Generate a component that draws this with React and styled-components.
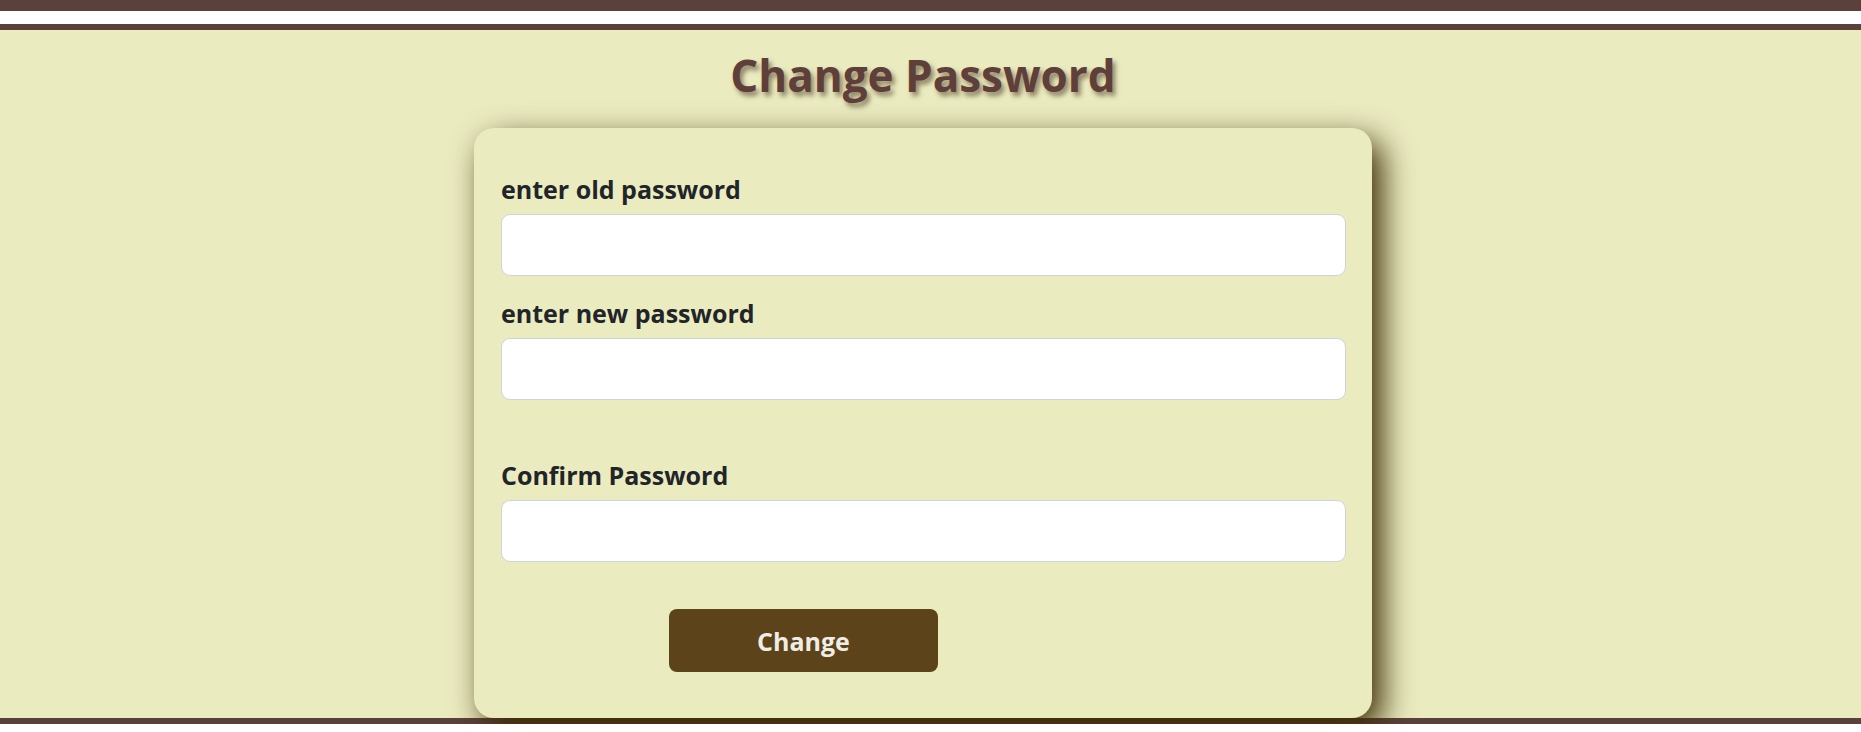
import React, { useState } from 'react';
import styled, { createGlobalStyle } from 'styled-components';

const GlobalStyle = createGlobalStyle`
    body {
        margin: 0;
        background: #ffffff;
        font-family: "Open Sans", "Noto Sans", sans-serif;
    }
    * {
        box-sizing: border-box;
    }
`;

// 상단 바
const TopBar = styled.div`
    height: 11px;
    background: #5c403c;
`;

// 본문 영역
const Main = styled.main`
    margin-top: 13px;
    background: #ebebc0;
    border-top: 6px solid #5c403c;
    border-bottom: 6px solid #5c403c;
    padding-right: 15px;
    display: flex;
    flex-direction: column;
    align-items: center;
`;

const Title = styled.h1`
    margin: 13px 0 21px;
    font-size: 44px;
    line-height: 64px;
    font-weight: 700;
    color: #5e3f3a;
    text-shadow: 3px 4px 5px rgba(60, 40, 20, 0.55);
`;

// 카드
const Card = styled.form`
    width: 898px;
    padding: 43px 26px 46px 27px;
    background: #ebebc0;
    border-radius: 20px;
    box-shadow: 10px 12px 32px rgba(58, 42, 0, 1);
    display: flex;
    flex-direction: column;
`;

const Label = styled.label`
    display: block;
    font-size: 25px;
    line-height: 36px;
    font-weight: 700;
    color: #212529;
    margin-top: ${(p) => p.$gap || 0}px;
    margin-bottom: 7px;
`;

const Input = styled.input`
    display: block;
    width: 100%;
    height: 62px;
    padding: 8px 16px;
    font-size: 20px;
    background: #ffffff;
    border: 1px solid #ced4da;
    border-radius: 9px;
    outline: none;
`;

const Button = styled.button`
    width: 269px;
    height: 63px;
    margin: 47px 0 0 168px;
    background: #5c4319;
    color: #f0ede6;
    border: none;
    border-radius: 8px;
    font-family: "Open Sans", "Noto Sans", sans-serif;
    font-size: 25px;
    font-weight: 700;
    cursor: pointer;
`;

export default function App() {
    const [oldPw, setOldPw] = useState('');
    const [newPw, setNewPw] = useState('');
    const [confirmPw, setConfirmPw] = useState('');

    return (
        <>
            <GlobalStyle />
            <TopBar />
            <Main>
                <Title>Change Password</Title>
                <Card onSubmit={(e) => e.preventDefault()}>
                    <Label htmlFor="old">enter old password</Label>
                    <Input id="old" type="password" value={oldPw} onChange={(e) => setOldPw(e.target.value)} />

                    <Label htmlFor="new" $gap={19}>enter new password</Label>
                    <Input id="new" type="password" value={newPw} onChange={(e) => setNewPw(e.target.value)} />

                    <Label htmlFor="confirm" $gap={57}>Confirm Password</Label>
                    <Input id="confirm" type="password" value={confirmPw} onChange={(e) => setConfirmPw(e.target.value)} />

                    <Button type="submit">Change</Button>
                </Card>
            </Main>
        </>
    );
}
